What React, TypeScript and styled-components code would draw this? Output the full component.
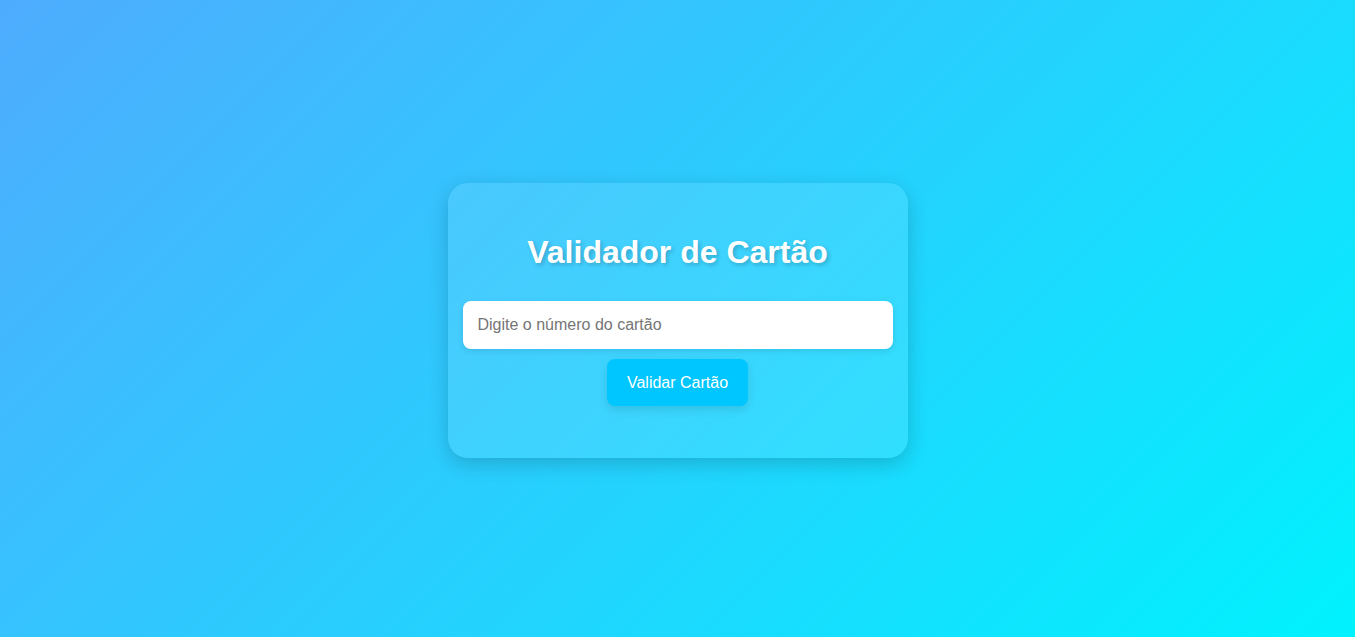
import React from "react";
import styled, { createGlobalStyle } from "styled-components";

const GlobalStyle = createGlobalStyle`
  * {
    box-sizing: border-box;
  }
  html, body {
    margin: 0;
    padding: 0;
  }
  body {
    font-family: "Liberation Sans", Arial, sans-serif;
    background: linear-gradient(135deg, #4facfe 0%, #00f2fe 100%);
    min-height: 100vh;
  }
`;

const Page = styled.div`
  min-height: 100vh;
  padding-top: 3px;
  display: flex;
  align-items: center;
  justify-content: center;
`;

const Card = styled.div`
  width: 460px;
  padding: 30px 15px;
  border-radius: 20px;
  background: rgba(255, 255, 255, 0.1);
  box-shadow: 0 6px 20px rgba(0, 0, 0, 0.18);
  display: flex;
  flex-direction: column;
  align-items: center;
`;

const Title = styled.h1`
  margin: 21px 0;
  font-size: 32px;
  font-weight: bold;
  color: #ffffff;
  text-shadow: 2px 2px 4px rgba(0, 0, 0, 0.2);
`;

const CardInput = styled.input`
  width: 100%;
  margin: 9px 0 0;
  padding: 15px;
  border: none;
  border-radius: 8px;
  font-family: inherit;
  font-size: 16px;
  line-height: 18px;
  color: #333;
  background: #ffffff;
  box-shadow: 0 2px 6px rgba(0, 0, 0, 0.1);
  outline: none;

  &::placeholder {
    color: #757575;
  }
`;

const ValidateButton = styled.button`
  margin: 10px 0 22px;
  padding: 15px 20px;
  border: none;
  border-radius: 8px;
  background: #00c6ff;
  color: #ffffff;
  font-family: inherit;
  font-size: 16px;
  line-height: 17px;
  cursor: pointer;
  box-shadow: 0 4px 10px rgba(0, 0, 0, 0.1);
`;

const App = () => {
  return (
    <>
      <GlobalStyle />
      <Page>
        <Card>
          <Title>Validador de Cartão</Title>
          <CardInput type="text" placeholder="Digite o número do cartão" />
          <ValidateButton>Validar Cartão</ValidateButton>
        </Card>
      </Page>
    </>
  );
};

export default App;
